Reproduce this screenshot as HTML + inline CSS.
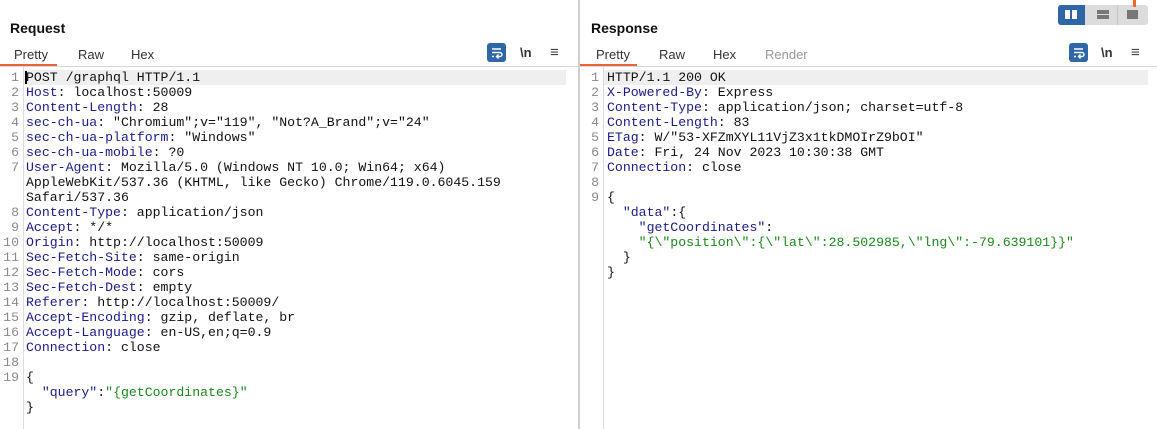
<!DOCTYPE html>
<html><head><style>
body{margin:0;width:1157px;height:429px;background:#fff;position:relative;overflow:hidden;font-family:"Liberation Sans",sans-serif}
.abs{position:absolute}
.title{font-weight:bold;font-size:14px;color:#111;top:20px}
.tab{font-size:13px;color:#333;top:47px}
.code{font-family:"Liberation Mono",monospace;font-size:13.2px;line-height:15px;color:#111;white-space:pre}
.ln{font-family:"Liberation Mono",monospace;font-size:13.2px;line-height:15px;color:#8a8a8a;white-space:pre;text-align:right}
.k{color:#1b1b8a}.s{color:#1a8a1a}
.wrap{width:19px;height:19px;background:#2f67a6;border-radius:3px}
</style></head><body>
<div class="abs" style="left:578px;top:0;width:2px;height:429px;background:#d0d0d0"></div>
<div class="abs" style="left:0;top:66px;width:578px;height:1px;background:#d8d8d8"></div>
<div class="abs" style="left:580px;top:66px;width:577px;height:1px;background:#d8d8d8"></div>

<div class="abs title" style="left:10px">Request</div>
<div class="abs title" style="left:591px">Response</div>

<div class="abs tab" style="left:14px">Pretty</div>
<div class="abs tab" style="left:78px">Raw</div>
<div class="abs tab" style="left:131px">Hex</div>
<div class="abs" style="left:0;top:64px;width:57px;height:2px;background:#e8643a"></div>

<div class="abs tab" style="left:596px">Pretty</div>
<div class="abs tab" style="left:659px">Raw</div>
<div class="abs tab" style="left:713px">Hex</div>
<div class="abs tab" style="left:765px;color:#999">Render</div>
<div class="abs" style="left:580px;top:64px;width:57px;height:2px;background:#e8643a"></div>

<div class="abs wrap" style="left:487px;top:43px"><svg width="19" height="19"><g stroke="#fff" stroke-width="1.4" fill="none"><path d="M5 6h9M5 9.5h8a2 2 0 0 1 0 4h-3M11.5 11.5l-2 2 2 2M5 13.5h2"/></g></svg></div>
<div class="abs" style="left:520px;top:45px;font-size:13px;font-weight:bold;color:#333">\n</div>
<div class="abs" style="left:550px;top:44px;font-size:15px;color:#444">≡</div>
<div class="abs wrap" style="left:1069px;top:43px"><svg width="19" height="19"><g stroke="#fff" stroke-width="1.4" fill="none"><path d="M5 6h9M5 9.5h8a2 2 0 0 1 0 4h-3M11.5 11.5l-2 2 2 2M5 13.5h2"/></g></svg></div>
<div class="abs" style="left:1101px;top:45px;font-size:13px;font-weight:bold;color:#333">\n</div>
<div class="abs" style="left:1131px;top:44px;font-size:15px;color:#444">≡</div>

<div class="abs" style="left:1058px;top:5px;width:90px;height:20px;background:#dcdcdc;border-radius:3px"></div>
<div class="abs" style="left:1058px;top:5px;width:27px;height:20px;background:#2f67a6;border-radius:3px 0 0 3px"></div>
<div class="abs" style="left:1065px;top:10px;width:5px;height:9px;background:#fff"></div>
<div class="abs" style="left:1072px;top:10px;width:5px;height:9px;background:#fff"></div>
<div class="abs" style="left:1097px;top:10px;width:12px;height:4px;background:#777"></div>
<div class="abs" style="left:1097px;top:15px;width:12px;height:4px;background:#777"></div>
<div class="abs" style="left:1117px;top:5px;width:1px;height:20px;background:#c8c8c8"></div>
<div class="abs" style="left:1127px;top:10px;width:11px;height:9px;background:#777"></div>
<div class="abs" style="left:1133px;top:0;width:3px;height:7px;background:#f06a2e"></div>

<div class="abs" style="left:23px;top:67px;width:1px;height:362px;background:#ddd"></div>
<div class="abs" style="left:603px;top:67px;width:1px;height:362px;background:#ddd"></div>
<div class="abs" style="left:24px;top:70px;width:542px;height:15px;background:#efefef"></div>
<div class="abs" style="left:604px;top:70px;width:544px;height:15px;background:#efefef"></div>
<div class="abs" style="left:25px;top:71px;width:2px;height:13px;background:#000"></div>

<div class="abs ln" style="left:0;top:70px;width:19px">1
2
3
4
5
6
7


8
9
10
11
12
13
14
15
16
17
18
19</div>
<div class="abs code" style="left:26px;top:70px">POST /graphql HTTP/1.1
<span class="k">Host</span>: localhost:50009
<span class="k">Content-Length</span>: 28
<span class="k">sec-ch-ua</span>: "Chromium";v="119", "Not?A_Brand";v="24"
<span class="k">sec-ch-ua-platform</span>: "Windows"
<span class="k">sec-ch-ua-mobile</span>: ?0
<span class="k">User-Agent</span>: Mozilla/5.0 (Windows NT 10.0; Win64; x64)
AppleWebKit/537.36 (KHTML, like Gecko) Chrome/119.0.6045.159
Safari/537.36
<span class="k">Content-Type</span>: application/json
<span class="k">Accept</span>: */*
<span class="k">Origin</span>: http://localhost:50009
<span class="k">Sec-Fetch-Site</span>: same-origin
<span class="k">Sec-Fetch-Mode</span>: cors
<span class="k">Sec-Fetch-Dest</span>: empty
<span class="k">Referer</span>: http://localhost:50009/
<span class="k">Accept-Encoding</span>: gzip, deflate, br
<span class="k">Accept-Language</span>: en-US,en;q=0.9
<span class="k">Connection</span>: close

{
  <span class="k">"query"</span>:<span class="s">"{getCoordinates}"</span>
}</div>

<div class="abs ln" style="left:580px;top:70px;width:19px">1
2
3
4
5
6
7
8
9</div>
<div class="abs code" style="left:607px;top:70px">HTTP/1.1 200 OK
<span class="k">X-Powered-By</span>: Express
<span class="k">Content-Type</span>: application/json; charset=utf-8
<span class="k">Content-Length</span>: 83
<span class="k">ETag</span>: W/"53-XFZmXYL11VjZ3x1tkDMOIrZ9bOI"
<span class="k">Date</span>: Fri, 24 Nov 2023 10:30:38 GMT
<span class="k">Connection</span>: close

{
  <span class="k">"data"</span>:{
    <span class="k">"getCoordinates"</span>:
    <span class="s">"{\"position\":{\"lat\":28.502985,\"lng\":-79.639101}}"</span>
  }
}</div>
</body></html>
